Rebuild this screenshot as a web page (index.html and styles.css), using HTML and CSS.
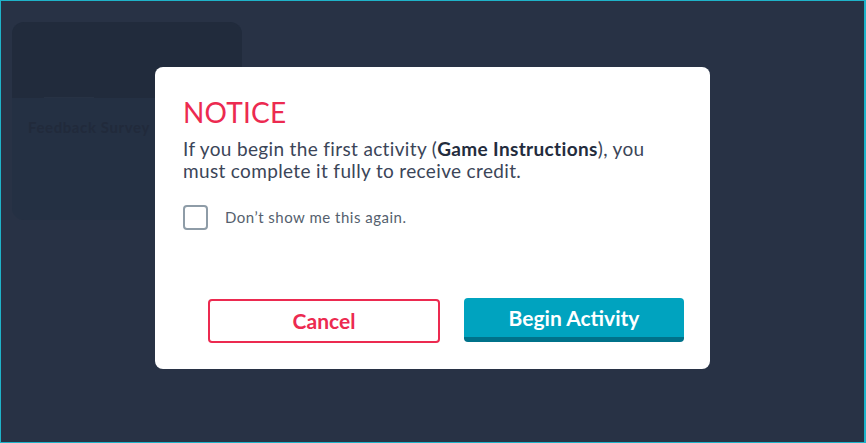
FILE: index.html
```html
<!DOCTYPE html>
<html lang="en">
<head>
<meta charset="utf-8">
<title>Notice</title>
<link rel="stylesheet" href="styles.css">
</head>
<body>
<main class="page">
  <div class="card">
    <div class="card-media"><span class="card-icon"></span></div>
    <div class="card-title">Feedback Survey</div>
  </div>
</main>
<div class="overlay">
  <div class="modal" role="dialog">
    <h1 class="modal-title">NOTICE</h1>
    <p class="modal-text">If you begin the first activity (<strong>Game Instructions</strong>), you must complete it fully to receive credit.</p>
    <label class="check-row">
      <span class="check-box"></span>
      <span class="check-label">Don’t show me this again.</span>
    </label>
    <div class="actions">
      <button class="btn btn-cancel">Cancel</button>
      <button class="btn btn-begin">Begin Activity</button>
    </div>
  </div>
</div>
</body>
</html>
```
FILE: styles.css
```css
html, body {
  margin: 0;
  height: 100%;
}
body {
  box-sizing: border-box;
  background: #283245;
  border: 1px solid #1fb3c9;
  border-right-width: 2px;
  font-family: Lato, "Noto Sans", sans-serif;
  overflow: hidden;
}
.page {
  padding: 21px 0 0 11px;
}
.card {
  width: 230px;
  height: 198px;
  border-radius: 12px;
  background: #243043;
  overflow: hidden;
}
.card-media {
  height: 76px;
  background: #212b3c;
  display: flex;
  align-items: flex-end;
  padding-left: 32px;
}
.card-icon {
  width: 50px;
  height: 24px;
  border-bottom: 1px solid #273244;
}
.card-title {
  padding: 20px 0 0 16px;
  font-size: 15px;
  font-weight: 700;
  letter-spacing: 0.6px;
  color: #212a3b;
}
.overlay {
  position: fixed;
  inset: 0;
  display: flex;
  justify-content: flex-start;
  align-items: flex-start;
  padding: 67px 0 0 155px;
}
.modal {
  box-sizing: border-box;
  width: 555px;
  height: 302px;
  background: #fff;
  border-radius: 8px;
  padding: 29px 26px 26px 28px;
  display: flex;
  flex-direction: column;
}
.modal-title {
  margin: 0;
  font-size: 28px;
  font-weight: 400;
  line-height: 1.2;
  color: #ec2a50;
  letter-spacing: 0.2px;
}
.modal-text {
  margin: 8px 0 0;
  max-width: 470px;
  font-size: 19px;
  line-height: 22.5px;
  color: #3b4558;
  letter-spacing: 0.35px;
}
.modal-text strong {
  font-weight: 700;
  color: #232c3d;
}
.check-row {
  display: flex;
  align-items: center;
  gap: 17px;
  margin-top: 22px;
}
.check-box {
  box-sizing: border-box;
  width: 25px;
  height: 25px;
  border: 2px solid #8e9ca7;
  border-radius: 4px;
}
.check-label {
  font-size: 15px;
  color: #555f6e;
  letter-spacing: 0.5px;
}
.actions {
  margin-top: auto;
  display: flex;
  justify-content: flex-end;
  align-items: flex-end;
  gap: 24px;
}
.btn {
  box-sizing: border-box;
  height: 44px;
  border-radius: 4px;
  font-family: Lato, "Noto Sans", sans-serif;
  font-weight: 700;
  font-size: 21px;
  cursor: pointer;
}
.btn-cancel {
  width: 232px;
  background: #fff;
  border: 2px solid #ec2a50;
  color: #ec2a50;
  padding-bottom: 3px;
}
.btn-begin {
  width: 220px;
  margin-bottom: 1px;
  background: #00a3bf;
  border: none;
  border-bottom: 5px solid #00728a;
  color: #fff;
  padding-top: 0;
}
```
